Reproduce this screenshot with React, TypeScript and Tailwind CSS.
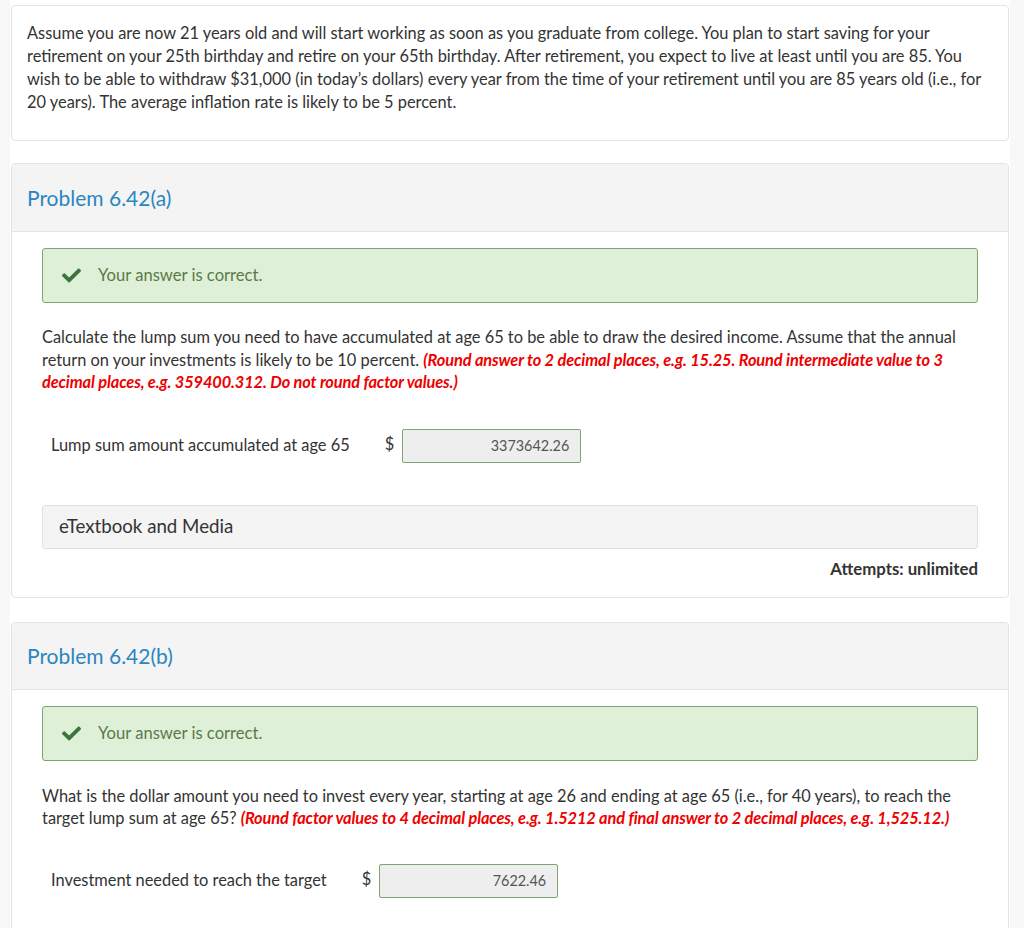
import React from "react";
import { FaCheck } from "react-icons/fa";

function Banner() {
  return (
    <div className="mt-4 h-[55px] flex items-center rounded-[3px] border border-[#7fa571] bg-[#dff0d8]">
      <FaCheck className="ml-[19px] text-[#3c763d]" size={19} />
      <span className="ml-[17px] text-[16.6px] text-[#5a7a48]">Your answer is correct.</span>
    </div>
  );
}

function InputRow({ label, value }: { label: string; value: string }) {
  return (
    <div className="flex items-center pl-[9px]">
      <span className="text-[16.4px] text-[#333]">{label}</span>
      <span className="ml-[35px] text-[16.4px] text-[#333] -mt-[3px]">$</span>
      <div className="ml-[8px] w-[179px] h-[34px] flex items-center justify-end pr-[11px] rounded-[2px] border border-[#7fa571] bg-[#eeeeee] text-[14.4px] text-[#555]">
        {value}
      </div>
    </div>
  );
}

function Header({ title, tall }: { title: string; tall?: boolean }) {
  return (
    <div
      className={
        tall
          ? "h-[68px] flex items-center px-[15px] bg-[#f4f4f4] border-b border-[#e3e3e3] rounded-t-[4px]"
          : "h-[67px] flex items-center px-[15px] bg-[#f4f4f4] border-b border-[#e3e3e3] rounded-t-[4px]"
      }
    >
      <span className="text-[21px] text-[#2a86c0]">{title}</span>
    </div>
  );
}

export default function App() {
  return (
    <div
      className="min-h-screen bg-[#f8f8f8] pl-[10px] pr-[14px]"
      style={{ fontFamily: "Lato, 'Open Sans', sans-serif" }}
    >
      <div className="bg-white px-px pt-[5px] pb-8 text-[#333]">
        <div className="border border-[#e3e3e3] rounded-[4px] px-[15px] pt-[15px] pb-[27px] text-[16.4px] leading-[23px]">
          Assume you are now 21 years old and will start working as soon as you graduate from college. You plan to start saving for your retirement on your 25th birthday and retire on your 65th birthday. After retirement, you expect to live at least until you are 85. You wish to be able to withdraw $31,000 (in today’s dollars) every year from the time of your retirement until you are 85 years old (i.e., for 20 years). The average inflation rate is likely to be 5 percent.
        </div>

        <div className="mt-[22px] border border-[#e3e3e3] rounded-[4px]">
          <Header title="Problem 6.42(a)" tall />
          <div className="px-[30px] pb-[16px]">
            <Banner />
            <p className="mt-[23px] text-[16.4px] leading-[22.5px]">
              Calculate the lump sum you need to have accumulated at age 65 to be able to draw the desired income. Assume that the annual return on your investments is likely to be 10 percent.{" "}
              <span className="font-bold italic text-[#ee0000] tracking-[-0.13px]">
                (Round answer to 2 decimal places, e.g. 15.25. Round intermediate value to 3 decimal places, e.g. 359400.312. Do not round factor values.)
              </span>
            </p>
            <div className="mt-[35px]">
              <InputRow label="Lump sum amount accumulated at age 65" value="3373642.26" />
            </div>
            <div className="mt-[42px] h-[44px] flex items-center pl-4 rounded-[3px] border border-[#e0e0e0] bg-[#f4f4f4] text-[18.7px] text-[#333]">
              eTextbook and Media
            </div>
            <div className="mt-[7px] text-right text-[16.8px] font-bold text-[#333]">Attempts: unlimited</div>
          </div>
        </div>

        <div className="mt-[24px] border border-[#e3e3e3] rounded-[4px]">
          <Header title="Problem 6.42(b)" />
          <div className="px-[30px] pb-[40px]">
            <Banner />
            <p className="mt-[24px] text-[16.4px] leading-[22.5px]">
              What is the dollar amount you need to invest every year, starting at age 26 and ending at age 65 (i.e., for 40 years), to reach the target lump sum at age 65?{" "}
              <span className="font-bold italic text-[#ee0000] tracking-[-0.13px]">
                (Round factor values to 4 decimal places, e.g. 1.5212 and final answer to 2 decimal places, e.g. 1,525.12.)
              </span>
            </p>
            <div className="mt-[34px]">
              <InputRow label="Investment needed to reach the target" value="7622.46" />
            </div>
          </div>
        </div>
      </div>
    </div>
  );
}
